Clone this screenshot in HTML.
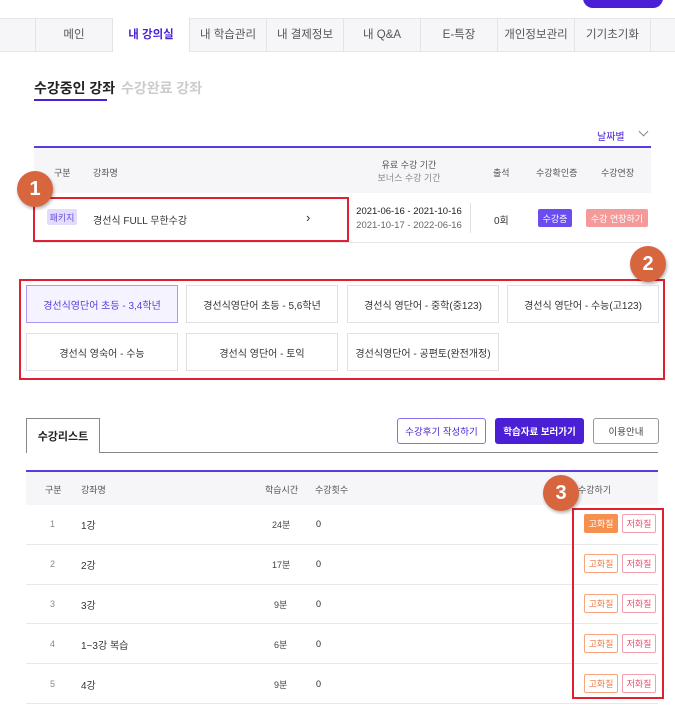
<!DOCTYPE html>
<html><head><meta charset="utf-8"><style>
*{margin:0;padding:0;box-sizing:border-box}
body{width:675px;height:712px;overflow:hidden;background:#fff;font-family:"Liberation Sans","Noto Sans CJK KR",sans-serif;position:relative;color:#222}
.a{position:absolute}
.nav{left:0;top:18px;width:675px;height:34px;background:#f6f6f8;border-top:1px solid #e6e6ea;border-bottom:1px solid #e6e6ea}
.nc{top:18px;height:34px;width:77px;border-left:1px solid #e3e3e8;font-size:11.5px;color:#555;text-align:center;line-height:34px}
.c{display:flex;align-items:center;justify-content:center}
.circ{width:36px;height:36px;border-radius:50%;background:#d7653e;color:#fff;font-weight:bold;font-size:20px;box-shadow:1px 2px 3px rgba(0,0,0,.3)}
.cb{height:38px;border:1px solid #e0e0e4;font-size:10px;color:#333;width:152px}
.hd{font-size:9px;color:#555}
.row{height:1px;background:#e8e8ec;left:26px;width:632px}
.bq{width:34px;height:19px;border:1px solid #f6a57e;color:#f07a44;font-size:9px;border-radius:2px}
.bl{width:34px;height:19px;border:1px solid #f4a0b0;color:#e8506e;font-size:9px;border-radius:2px}
.t{font-size:10px;color:#333}
.r{position:absolute;left:0;width:675px;height:14px}
.r>div{position:absolute;top:0;line-height:14px}
.r .n{left:50px;font-size:9px;color:#888}
.r .nm{left:81px;font-size:10px;color:#333;top:3px}
.r .tm{font-size:9px;color:#444;top:1px}
.r .z{left:316px;font-size:9px}
.r .bq,.r .bl{top:-3px;line-height:normal}
</style></head><body>
<div class="a" style="left:583px;top:-12px;width:80px;height:20px;background:#4a1fd6;border-radius:10px"></div>
<div class="a nav"></div>
<div class="a nc" style="left:35px">메인</div>
<div class="a nc" style="left:112px;background:#fff;color:#4a1fd6;font-weight:bold">내 강의실</div>
<div class="a nc" style="left:189px">내 학습관리</div>
<div class="a nc" style="left:266px">내 결제정보</div>
<div class="a nc" style="left:343px">내 Q&amp;A</div>
<div class="a nc" style="left:420px">E-특장</div>
<div class="a nc" style="left:497px">개인정보관리</div>
<div class="a nc" style="left:574px;border-right:1px solid #e3e3e8">기기초기화</div>

<div class="a" style="left:34px;top:78px;font-size:14px;font-weight:bold;color:#222">수강중인 강좌</div>
<div class="a" style="left:121px;top:78px;font-size:14px;font-weight:bold;color:#ccc">수강완료 강좌</div>
<div class="a" style="left:34px;top:99px;width:73px;height:2px;background:#4a1fd6"></div>

<div class="a" style="left:597px;top:128px;font-size:10px;color:#4a1fd6">날짜별</div>
<div class="a" style="left:640px;top:128px;width:7px;height:7px;border-right:1px solid #888;border-bottom:1px solid #888;transform:rotate(45deg)"></div>
<div class="a" style="left:34px;top:146px;width:617px;height:2px;background:#5b3be0"></div>
<div class="a" style="left:34px;top:148px;width:617px;height:45px;background:#f6f6f8"></div>
<div class="a hd" style="left:54px;top:166px">구분</div>
<div class="a hd" style="left:93px;top:166px">강좌명</div>
<div class="a hd" style="left:370px;top:159px;width:78px;text-align:center;line-height:13px">유료 수강 기간<br><span style="color:#888">보너스 수강 기간</span></div>
<div class="a hd" style="left:493px;top:166px">출석</div>
<div class="a hd" style="left:536px;top:166px">수강확인증</div>
<div class="a hd" style="left:601px;top:166px">수강연장</div>
<div class="a" style="left:34px;top:242px;width:617px;height:1px;background:#e5e5ea"></div>
<div class="a c" style="left:47px;top:209px;width:30px;height:16px;background:#e4dcfc;color:#6a4fe0;font-size:9px;border-radius:2px">패키지</div>
<div class="a t" style="left:93px;top:212px">경선식 FULL 무한수강</div>
<div class="a" style="left:306px;top:210px;font-size:13px;color:#333">›</div>
<div class="a" style="left:355px;top:205px;width:108px;text-align:center;font-size:9.5px;line-height:14px;color:#222">2021-06-16 - 2021-10-16<br><span style="color:#666">2021-10-17 - 2022-06-16</span></div>
<div class="a" style="left:470px;top:203px;width:1px;height:30px;background:#e0e0e4"></div>
<div class="a t" style="left:494px;top:212px">0회</div>
<div class="a c" style="left:538px;top:209px;width:34px;height:18px;background:#6a4cf0;color:#fff;font-size:9px;border-radius:2px">수강증</div>
<div class="a c" style="left:586px;top:209px;width:62px;height:18px;background:#f59a9a;color:#fff;font-size:9px;border-radius:2px">수강 연장하기</div>
<div class="a" style="left:33px;top:197px;width:316px;height:45px;border:2px solid #e02030"></div>
<div class="a circ c" style="left:17px;top:171px">1</div>

<div class="a" style="left:19px;top:279px;width:646px;height:101px;border:2px solid #e02030"></div>
<div class="a circ c" style="left:630px;top:246px">2</div>
<div class="a cb c" style="left:26px;top:285px;border-color:#a59af4;background:#f5f3ff;color:#5b3be0">경선식영단어 초등 - 3,4학년</div>
<div class="a cb c" style="left:186px;top:285px">경선식영단어 초등 - 5,6학년</div>
<div class="a cb c" style="left:347px;top:285px">경선식 영단어 - 중학(중123)</div>
<div class="a cb c" style="left:507px;top:285px">경선식 영단어 - 수능(고123)</div>
<div class="a cb c" style="left:26px;top:333px">경선식 영숙어 - 수능</div>
<div class="a cb c" style="left:186px;top:333px">경선식 영단어 - 토익</div>
<div class="a cb c" style="left:347px;top:333px">경선식영단어 - 공편토(완전개정)</div>

<div class="a" style="left:26px;top:452px;width:632px;height:1px;background:#888"></div>
<div class="a c" style="left:26px;top:418px;width:74px;height:35px;border:1px solid #888;border-bottom:none;background:#fff;font-size:11px;font-weight:bold">수강리스트</div>
<div class="a c" style="left:397px;top:418px;width:89px;height:26px;border:1px solid #8a70f0;border-radius:3px;color:#4a1fd6;font-size:9.5px">수강후기 작성하기</div>
<div class="a c" style="left:495px;top:418px;width:89px;height:26px;background:#4a1fd6;border-radius:3px;color:#fff;font-size:9.5px;font-weight:bold">학습자료 보러가기</div>
<div class="a c" style="left:593px;top:418px;width:66px;height:26px;border:1px solid #999;border-radius:3px;color:#444;font-size:9.5px">이용안내</div>

<div class="a" style="left:26px;top:470px;width:632px;height:2px;background:#5b3be0"></div>
<div class="a" style="left:26px;top:472px;width:632px;height:33px;background:#f6f6f8"></div>
<div class="a hd" style="left:45px;top:483px">구분</div>
<div class="a hd" style="left:81px;top:483px">강좌명</div>
<div class="a hd" style="left:265px;top:483px">학습시간</div>
<div class="a hd" style="left:315px;top:483px">수강횟수</div>
<div class="a hd" style="left:578px;top:483px">수강하기</div>

<div class="a row" style="top:544px"></div><div class="a row" style="top:584px"></div><div class="a row" style="top:623px"></div><div class="a row" style="top:663px"></div><div class="a row" style="top:703px"></div>

<div class="r" style="top:517px"><div class="n">1</div><div class="nm">1강</div><div class="tm" style="left:272px">24분</div><div class="z">0</div>
<div class="c bq" style="left:584px;background:#f7904f;color:#fff;border-color:#f7904f">고화질</div><div class="c bl" style="left:622px">저화질</div></div>
<div class="r" style="top:557px"><div class="n">2</div><div class="nm">2강</div><div class="tm" style="left:272px">17분</div><div class="z">0</div>
<div class="c bq" style="left:584px">고화질</div><div class="c bl" style="left:622px">저화질</div></div>
<div class="r" style="top:597px"><div class="n">3</div><div class="nm">3강</div><div class="tm" style="left:274px">9분</div><div class="z">0</div>
<div class="c bq" style="left:584px">고화질</div><div class="c bl" style="left:622px">저화질</div></div>
<div class="r" style="top:637px"><div class="n">4</div><div class="nm">1~3강 복습</div><div class="tm" style="left:274px">6분</div><div class="z">0</div>
<div class="c bq" style="left:584px">고화질</div><div class="c bl" style="left:622px">저화질</div></div>
<div class="r" style="top:677px"><div class="n">5</div><div class="nm">4강</div><div class="tm" style="left:274px">9분</div><div class="z">0</div>
<div class="c bq" style="left:584px">고화질</div><div class="c bl" style="left:622px">저화질</div></div>

<div class="a" style="left:572px;top:508px;width:92px;height:191px;border:2px solid #e02030"></div>
<div class="a circ c" style="left:543px;top:475px">3</div>
</body></html>
